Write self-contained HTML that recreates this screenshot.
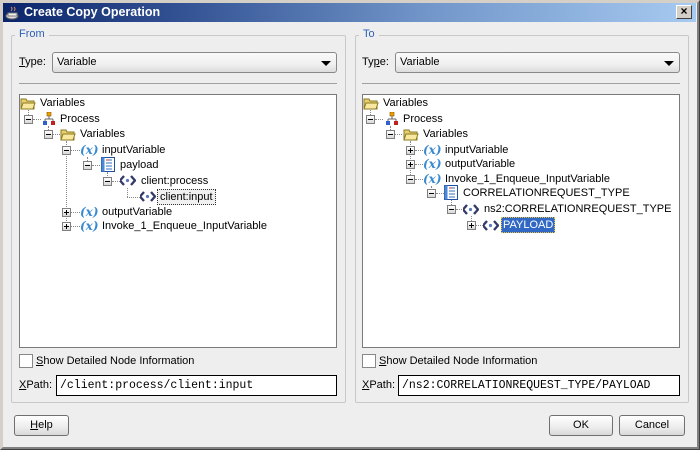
<!DOCTYPE html>
<html><head><meta charset="utf-8"><style>
*{box-sizing:border-box;margin:0;padding:0}
body{width:700px;height:450px;overflow:hidden;background:#d4d0c8;font-family:"Liberation Sans","DejaVu Sans",sans-serif;font-size:11px;color:#000;position:relative}
.win{position:absolute;left:0;top:0;width:700px;height:450px;border:1px solid #d4d0c8;border-right-color:#404040;border-bottom-color:#404040;background:#eeeeee}
.win:before{content:"";position:absolute;left:0;top:0;right:0;bottom:0;border:2px solid #d4d0c8;border-bottom-color:#808080;border-right-color:#808080}
.title{position:absolute;left:3px;top:3px;width:693px;height:19px;background:linear-gradient(90deg,#0a246a 0%,#3a5a9a 30%,#7094c8 60%,#a6caf0 100%);color:#fff;font-weight:bold;font-size:12.5px;line-height:19px;padding-left:21px}
.close{position:absolute;left:676px;top:5px;width:16px;height:14px;background:#d4d0c8;border:1px solid #fff;border-right-color:#404040;border-bottom-color:#404040;font-size:12px;line-height:11px;text-align:center;color:#000;font-weight:bold}
.fs{position:absolute;border:1px solid #c8c8c8;border-radius:2px}
.legend{position:absolute;background:#eeeeee;color:#2d5fb7;font-size:11px;padding:0 4px}
.abs{position:absolute;white-space:nowrap}
.combo{position:absolute;height:21px;border:1px solid #888;border-radius:3px;background:linear-gradient(#fafafa,#f0f0f0 60%,#dcdcdc);padding-left:4px;line-height:19px}
.combo b{position:absolute;right:5px;top:8px;width:0;height:0;border-left:5px solid transparent;border-right:5px solid transparent;border-top:5px solid #000}
.sep{position:absolute;height:1px;background:#a0a0a0}
.tree{position:absolute;background:#fff;border:1px solid #7a7a7a;overflow:hidden}
.t{position:absolute;white-space:nowrap;line-height:14px;height:14px}
.ex{position:absolute;width:9px;height:9px;border:1px solid #808080;background:linear-gradient(#fff,#d8d8d8);}
.ex:after{content:"";position:absolute;left:1px;top:3px;width:5px;height:1px;background:#000}
.ex.p:before{content:"";position:absolute;left:3px;top:1px;width:1px;height:5px;background:#000}
.hl{position:absolute;border-top:1px dotted #888;height:1px}
.vl{position:absolute;border-left:1px dotted #888;width:1px}
.xv{position:absolute;color:#3a8ad0;font-style:italic;font-weight:bold;font-size:12px;font-family:"DejaVu Serif",serif;line-height:14px}
.cb{position:absolute;width:14px;height:14px;border:1px solid #888;background:#fff}
.inp{position:absolute;height:21px;border:1px solid #000;background:#fff;font-family:"Liberation Mono",monospace;font-size:11.5px;line-height:19px;padding-left:3px}
.btn{position:absolute;height:21px;border:1px solid #707070;border-radius:3px;background:linear-gradient(#fff,#ececec 60%,#d8d8d8);text-align:center;line-height:19px}
</style></head><body>
<div class="win"></div>
<div class="title">Create Copy Operation</div>
<svg class="abs" style="left:5px;top:5px" width="15" height="15"><ellipse cx="7" cy="11" rx="6" ry="3" fill="#ddd" stroke="#666"/><path d="M3 8h9v3H3z" fill="#f0f0f0" stroke="#777"/><path d="M6 2q2 2 0 4M9 2q2 2 0 4" stroke="#c86" fill="none"/></svg>
<div class="close">×</div>

<div class="fs" style="left:11px;top:35px;width:335px;height:368px"></div>
<div class="legend" style="left:15px;top:28px">From</div>
<div class="abs" style="left:19px;top:56px"><u>T</u>ype:</div>
<div class="combo" style="left:52px;top:52px;width:285px">Variable<b></b></div>
<div class="sep" style="left:19px;top:83px;width:318px"></div>
<div class="tree" style="left:19px;top:94px;width:318px;height:254px"></div>

<div class="fs" style="left:355px;top:35px;width:334px;height:368px"></div>
<div class="legend" style="left:359px;top:28px">To</div>
<div class="abs" style="left:362px;top:56px">Ty<u>p</u>e:</div>
<div class="combo" style="left:395px;top:52px;width:285px">Variable<b></b></div>
<div class="sep" style="left:362px;top:83px;width:318px"></div>
<div class="tree" style="left:362px;top:94px;width:318px;height:254px"></div>

<svg width="0" height="0" style="position:absolute"><defs>
<g id="fold"><path d="M1 3h5l1 2h7v8H1z" fill="#e8d070" stroke="#8a7a20"/><path d="M1 13l2-6h12l-2 6z" fill="#f8e8a0" stroke="#8a7a20"/></g>
<g id="proc"><rect x="5" y="0" width="4" height="4" fill="#f0a000" stroke="#805000" stroke-width=".6"/><path d="M7 4v3M3 7h8M3 7v2M11 7v2" stroke="#666"/><rect x="1" y="9" width="4" height="4" fill="#3060d0"/><rect x="9" y="9" width="4" height="4" fill="#c02020"/></g>
<g id="doc"><rect x="1.5" y="0.5" width="13" height="14" fill="#fff" stroke="#2050a0"/><rect x="1.5" y="0.5" width="3" height="14" fill="#4a88d8"/><path d="M6 3h6M6 6h6M6 9h6M6 12h6" stroke="#3070c0"/><path d="M6 3h3" stroke="#c03030"/></g>
<g id="dia"><path d="M4 2L0 6.5 4 11" stroke="#343a6a" stroke-width="2.4" fill="none"/><path d="M11 2l4 4.5-4 4.5" stroke="#343a6a" stroke-width="2.4" fill="none"/><circle cx="7.5" cy="6.5" r="1.6" fill="#5a78c0"/></g>
</defs></svg>

<div class="vl" style="left:28px;top:110px;height:9px"></div>
<div class="vl" style="left:48px;top:126px;height:8px"></div>
<div class="vl" style="left:66px;top:141px;height:86px"></div>
<div class="vl" style="left:87px;top:157px;height:8px"></div>
<div class="vl" style="left:107px;top:172px;height:8px"></div>
<div class="vl" style="left:127px;top:188px;height:9px"></div>
<div class="hl" style="left:33px;top:119px;width:8px"></div>
<div class="hl" style="left:53px;top:134px;width:7px"></div>
<div class="hl" style="left:71px;top:150px;width:9px"></div>
<div class="hl" style="left:92px;top:165px;width:8px"></div>
<div class="hl" style="left:112px;top:181px;width:8px"></div>
<div class="hl" style="left:127px;top:197px;width:13px"></div>
<div class="hl" style="left:71px;top:212px;width:9px"></div>
<div class="hl" style="left:71px;top:226px;width:9px"></div>

<svg class="abs" style="left:20px;top:96px" width="16" height="14"><use href="#fold"/></svg>
<div class="t" style="left:40px;top:96px">Variables</div>
<div class="ex" style="left:24px;top:115px"></div>
<svg class="abs" style="left:42px;top:112px" width="14" height="14"><use href="#proc"/></svg>
<div class="t" style="left:60px;top:112px">Process</div>
<div class="ex" style="left:44px;top:130px"></div>
<svg class="abs" style="left:60px;top:127px" width="16" height="14"><use href="#fold"/></svg>
<div class="t" style="left:80px;top:127px">Variables</div>
<div class="ex" style="left:62px;top:146px"></div>
<div class="xv" style="left:80px;top:143px">(x)</div>
<div class="t" style="left:102px;top:143px">inputVariable</div>
<div class="ex" style="left:83px;top:161px"></div>
<svg class="abs" style="left:100px;top:157px" width="16" height="16"><use href="#doc"/></svg>
<div class="t" style="left:120px;top:158px">payload</div>
<div class="ex" style="left:103px;top:177px"></div>
<svg class="abs" style="left:120px;top:174px" width="16" height="13"><use href="#dia"/></svg>
<div class="t" style="left:141px;top:174px">client:process</div>
<svg class="abs" style="left:140px;top:190px" width="16" height="13"><use href="#dia"/></svg>
<div class="t" style="left:157px;top:189px;border:1px dotted #333;background:#f0f0f0;padding:0 2px;height:16px">client:input</div>
<div class="ex p" style="left:62px;top:208px"></div>
<div class="xv" style="left:80px;top:205px">(x)</div>
<div class="t" style="left:102px;top:205px">outputVariable</div>
<div class="ex p" style="left:62px;top:222px"></div>
<div class="xv" style="left:80px;top:219px">(x)</div>
<div class="t" style="left:102px;top:219px">Invoke_1_Enqueue_InputVariable</div>

<div class="vl" style="left:370px;top:110px;height:9px"></div>
<div class="vl" style="left:390px;top:126px;height:8px"></div>
<div class="vl" style="left:410px;top:141px;height:38px"></div>
<div class="vl" style="left:431px;top:186px;height:8px"></div>
<div class="vl" style="left:451px;top:200px;height:9px"></div>
<div class="vl" style="left:471px;top:216px;height:5px"></div>
<div class="hl" style="left:375px;top:119px;width:8px"></div>
<div class="hl" style="left:395px;top:134px;width:7px"></div>
<div class="hl" style="left:415px;top:150px;width:8px"></div>
<div class="hl" style="left:415px;top:164px;width:8px"></div>
<div class="hl" style="left:415px;top:179px;width:8px"></div>
<div class="hl" style="left:436px;top:193px;width:8px"></div>
<div class="hl" style="left:456px;top:209px;width:8px"></div>
<div class="hl" style="left:476px;top:225px;width:7px"></div>

<svg class="abs" style="left:363px;top:96px" width="16" height="14"><use href="#fold"/></svg>
<div class="t" style="left:383px;top:96px">Variables</div>
<div class="ex" style="left:366px;top:115px"></div>
<svg class="abs" style="left:385px;top:112px" width="14" height="14"><use href="#proc"/></svg>
<div class="t" style="left:403px;top:112px">Process</div>
<div class="ex" style="left:386px;top:130px"></div>
<svg class="abs" style="left:403px;top:127px" width="16" height="14"><use href="#fold"/></svg>
<div class="t" style="left:423px;top:127px">Variables</div>
<div class="ex p" style="left:406px;top:146px"></div>
<div class="xv" style="left:423px;top:143px">(x)</div>
<div class="t" style="left:445px;top:143px">inputVariable</div>
<div class="ex p" style="left:406px;top:160px"></div>
<div class="xv" style="left:423px;top:157px">(x)</div>
<div class="t" style="left:445px;top:157px">outputVariable</div>
<div class="ex" style="left:406px;top:175px"></div>
<div class="xv" style="left:423px;top:172px">(x)</div>
<div class="t" style="left:445px;top:172px">Invoke_1_Enqueue_InputVariable</div>
<div class="ex" style="left:427px;top:189px"></div>
<svg class="abs" style="left:443px;top:185px" width="16" height="16"><use href="#doc"/></svg>
<div class="t" style="left:463px;top:186px">CORRELATIONREQUEST_TYPE</div>
<div class="ex" style="left:447px;top:205px"></div>
<svg class="abs" style="left:463px;top:203px" width="16" height="13"><use href="#dia"/></svg>
<div class="t" style="left:484px;top:202px">ns2:CORRELATIONREQUEST_TYPE</div>
<div class="ex p" style="left:467px;top:221px"></div>
<svg class="abs" style="left:483px;top:219px" width="16" height="13"><use href="#dia"/></svg>
<div class="t" style="left:501px;top:217px;background:#3168c4;color:#fff;border:1px dotted #e8c040;padding:0 1px;height:16px">PAYLOAD</div>

<div class="cb" style="left:19px;top:354px"></div>
<div class="abs" style="left:36px;top:355px"><u>S</u>how Detailed Node Information</div>
<div class="abs" style="left:19px;top:379px"><u>X</u>Path:</div>
<div class="inp" style="left:56px;top:375px;width:281px">/client:process/client:input</div>
<div class="cb" style="left:362px;top:354px"></div>
<div class="abs" style="left:379px;top:355px"><u>S</u>how Detailed Node Information</div>
<div class="abs" style="left:362px;top:379px"><u>X</u>Path:</div>
<div class="inp" style="left:398px;top:375px;width:282px">/ns2:CORRELATIONREQUEST_TYPE/PAYLOAD</div>

<div class="btn" style="left:14px;top:415px;width:55px"><u>H</u>elp</div>
<div class="btn" style="left:549px;top:415px;width:64px">OK</div>
<div class="btn" style="left:619px;top:415px;width:66px">Cancel</div>
</body></html>
